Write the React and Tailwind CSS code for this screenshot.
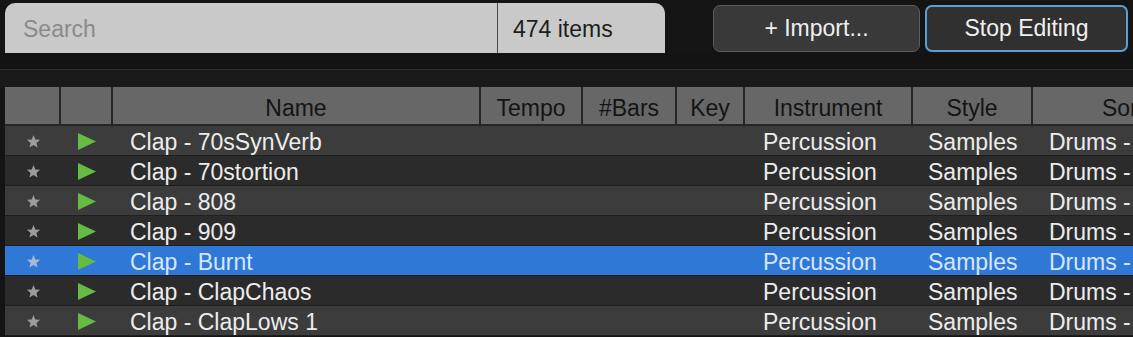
import React from 'react'

const cols = [
  { key: 'fav', label: '', w: 'w-[54px]' },
  { key: 'play', label: '', w: 'w-[50px]' },
  { key: 'name', label: 'Name', w: 'w-[366px]' },
  { key: 'tempo', label: 'Tempo', w: 'w-[100px]' },
  { key: 'bars', label: '#Bars', w: 'w-[92px]' },
  { key: 'key', label: 'Key', w: 'w-[66px]' },
  { key: 'inst', label: 'Instrument', w: 'w-[166px]' },
  { key: 'style', label: 'Style', w: 'w-[118px]' },
  { key: 'sort', label: 'Sort', w: 'w-[180px]' },
]

const rows = [
  'Clap - 70sSynVerb',
  'Clap - 70stortion',
  'Clap - 808',
  'Clap - 909',
  'Clap - Burnt',
  'Clap - ClapChaos',
  'Clap - ClapLows 1',
]

function Star({ selected }) {
  return (
    <svg width="15" height="15" viewBox="0 0 24 24">
      <polygon
        points="12,1.5 14.9,8.6 22.5,9.2 16.7,14.2 18.5,21.7 12,17.7 5.5,21.7 7.3,14.2 1.5,9.2 9.1,8.6"
        fill={selected ? '#a9b9d3' : '#9c9c9c'}
      />
    </svg>
  )
}

function Play() {
  return (
    <svg width="18" height="17" viewBox="0 0 18 17">
      <polygon points="0,0 18,8.5 0,17" fill="#66bb44" />
    </svg>
  )
}

export default function App() {
  return (
    <div className="w-[1133px] h-[337px] overflow-hidden bg-[#141414] font-['Liberation_Sans',Arial,sans-serif] text-[23px]">
      {/* top bar */}
      <div className="flex items-start h-[53px] pt-[3px] pl-[5px]">
        <div className="flex items-center w-[492px] h-[50px] bg-[#c9c9c9] rounded-tl-[10px] pl-[18px] pt-[2px] text-[#8a8a8a]">
          Search
        </div>
        <div className="w-px h-[50px] bg-[#4a4a4a]" />
        <div className="flex items-center w-[167px] h-[50px] bg-[#c9c9c9] rounded-tr-[10px] pl-[15px] pt-[2px] text-[#1e1e1e]">
          474 items
        </div>
        <button className="ml-[48px] mt-[2px] w-[207px] h-[47px] flex items-center justify-center rounded-[7px] border border-[#5c5c5c] bg-[#393939] text-[#efefef]">
          + Import...
        </button>
        <button className="ml-[5px] mt-[2px] w-[203px] h-[47px] flex items-center justify-center rounded-[7px] border-2 border-[#5b9fd6] bg-[#303030] text-[#efefef]">
          Stop Editing
        </button>
      </div>

      {/* spacer strip */}
      <div className="h-[34px] flex flex-col">
        <div className="h-[16px] bg-[#131313]" />
        <div className="h-px bg-[#2d2d2d]" />
        <div className="flex-1 bg-[#1a1a1a]" />
      </div>

      {/* table */}
      <div className="ml-[5px]">
        <div className="flex h-[39px] gap-[2px] bg-[#262626] border-b-2 border-[#262626]">
          {cols.map((c) => (
            <div
              key={c.key}
              className={`${c.w} shrink-0 flex items-center justify-center pt-[5px] bg-[#676767] text-[#141414] whitespace-nowrap overflow-hidden`}
            >
              {c.label}
            </div>
          ))}
        </div>
        {rows.map((name, i) => {
          const selected = i === 4
          const bg = selected ? 'bg-[#2f78d6]' : i % 2 === 0 ? 'bg-[#3c3c3c]' : 'bg-[#2b2b2b]'
          const txt = selected ? 'text-[#d6e6ff]' : 'text-[#ececec]'
          return (
            <div key={name} className={`flex h-[30px] items-center pt-[4px] border-b border-[#1f1f1f] ${bg} ${txt}`}>
              <div className="w-[56px] shrink-0 flex justify-center -mt-[3px]"><Star selected={selected} /></div>
              <div className="w-[52px] shrink-0 flex justify-center -mt-[3px]"><Play /></div>
              <div className="w-[368px] shrink-0 pl-[17px] whitespace-nowrap">{name}</div>
              <div className="w-[102px] shrink-0" />
              <div className="w-[94px] shrink-0" />
              <div className="w-[68px] shrink-0" />
              <div className="w-[168px] shrink-0 pl-[18px]">Percussion</div>
              <div className="w-[120px] shrink-0 pl-[15px]">Samples</div>
              <div className="shrink-0 pl-[16px] whitespace-nowrap">Drums - Clap</div>
            </div>
          )
        })}
      </div>
    </div>
  )
}
